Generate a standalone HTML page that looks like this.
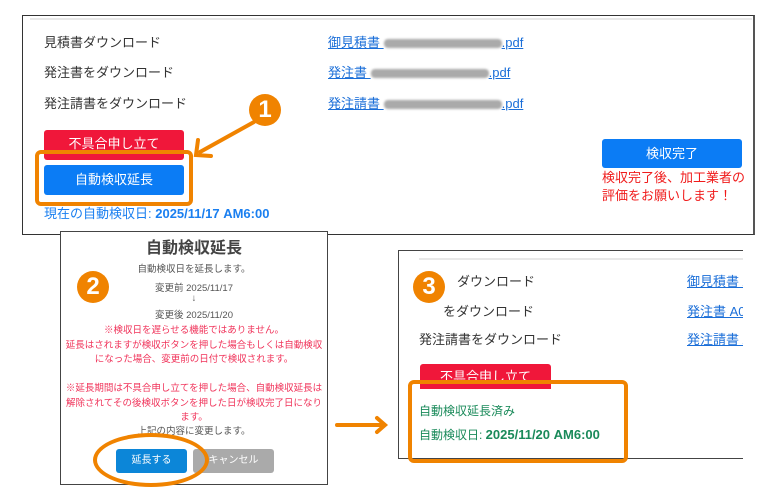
<!DOCTYPE html>
<html><head><meta charset="utf-8"><style>
*{margin:0;padding:0;box-sizing:border-box}
body{width:770px;height:500px;background:#fff;position:relative;overflow:hidden;font-family:"Liberation Sans","Noto Sans CJK JP",sans-serif;}
.a{position:absolute;white-space:nowrap}
.t{font-size:13px;color:#333}
.l{font-size:13px;color:#1a6ed8;text-decoration:underline}
.blur{display:inline-block;width:118px;height:9px;background:#aaa;border-radius:4px;vertical-align:middle;filter:blur(1px)}
.btn{position:absolute;color:#fff;font-size:13px;text-align:center;border-radius:3px}
.circ{position:absolute;width:32px;height:32px;border-radius:50%;background:#f08300;color:#fff;font-weight:bold;font-size:24px;text-align:center;line-height:32px}
.m{font-size:9.5px;text-align:center;position:absolute;left:60px;width:268px}
</style></head><body>
<div class="a" style="left:22px;top:15px;width:733px;height:220px;border:1px solid #333;border-right:2px solid #555"></div>
<div class="a" style="left:30px;top:18px;width:722px;height:2px;background:#e8e8e8"></div>
<div class="a t" style="left:44px;top:32px">見積書ダウンロード</div>
<div class="a t" style="left:44px;top:62px">発注書をダウンロード</div>
<div class="a t" style="left:44px;top:93px">発注請書をダウンロード</div>
<div class="a l" style="left:328px;top:32px">御見積書 <span class="blur"></span>.pdf</div>
<div class="a l" style="left:328px;top:62px">発注書 <span class="blur"></span>.pdf</div>
<div class="a l" style="left:328px;top:93px">発注請書 <span class="blur"></span>.pdf</div>
<div class="btn" style="left:44px;top:130px;width:140px;height:30px;background:#f0173a;line-height:28px">不具合申し立て</div>
<div class="btn" style="left:44px;top:165px;width:140px;height:30px;background:#0b7cf5;line-height:30px">自動検収延長</div>
<div class="a" style="left:35px;top:150px;width:158px;height:56px;border:4px solid #f08300;border-radius:6px"></div>
<div class="a" style="left:44px;top:203px;font-size:13px;color:#1a7ff0">現在の自動検収日: <b>2025/11/17 AM6:00</b></div>
<div class="btn" style="left:602px;top:139px;width:140px;height:29px;background:#0b7cf5;line-height:29px">検収完了</div>
<div class="a" style="left:602px;top:169px;font-size:13px;color:#f01b1b;line-height:18px">検収完了後、加工業者の<br>評価をお願いします！</div>
<div class="circ" style="left:249px;top:94px">1</div>
<svg class="a" style="left:0;top:0" width="770" height="500"><g stroke="#f08300" stroke-width="4" fill="none" stroke-linecap="round"><path d="M254 122 L200 152"/><path d="M198 140 L196 155 L211 156"/><path d="M337 425 L384 425"/><path d="M377 418 L385 425 L377 432"/></g></svg>
<!-- modal -->
<div class="a" style="left:60px;top:231px;width:268px;height:254px;border:1px solid #444;background:#fff"></div>
<div class="a" style="left:60px;top:234px;width:268px;text-align:center;font-size:16px;font-weight:bold;color:#444">自動検収延長</div>
<div class="m" style="top:261px;color:#555">自動検収日を延長します。</div>
<div class="m" style="top:280px;color:#555">変更前 2025/11/17</div>
<div class="m" style="top:293px;color:#555">↓</div>
<div class="m" style="top:307px;color:#555">変更後 2025/11/20</div>
<div class="m" style="top:324px;color:#f0335a;line-height:14.5px">※検収日を遅らせる機能ではありません。<br>延長はされますが検収ボタンを押した場合もしくは自動検収<br>になった場合、変更前の日付で検収されます。<br><br>※延長期間は不具合申し立てを押した場合、自動検収延長は<br>解除されてその後検収ボタンを押した日が検収完了日になり<br>ます。</div>
<div class="m" style="top:423px;color:#555">上記の内容に変更します。</div>
<div class="btn" style="left:116px;top:449px;width:71px;height:24px;background:#0c86d8;font-size:10px;line-height:24px">延長する</div>
<div class="btn" style="left:193px;top:449px;width:81px;height:24px;background:#aaa;font-size:10px;line-height:24px">キャンセル</div>
<div class="a" style="left:93px;top:433px;width:116px;height:54px;border:4px solid #f08300;border-radius:50%"></div>
<div class="circ" style="left:77px;top:271px">2</div>
<!-- panel 3 -->
<div class="a" style="left:398px;top:250px;width:345px;height:209px;border:1px solid #444;border-right:none;overflow:hidden;background:#fff">
<div class="a" style="left:20px;top:7px;width:330px;height:2px;background:#e8e8e8"></div>
<div class="a t" style="left:20px;top:78px">発注請書をダウンロード</div>
<div class="a t" style="left:58px;top:20px">ダウンロード</div>
<div class="a t" style="left:44px;top:50px">をダウンロード</div>
<div class="a l" style="left:288px;top:20px">御見積書 A</div>
<div class="a l" style="left:288px;top:50px">発注書 A0</div>
<div class="a l" style="left:288px;top:78px">発注請書 A</div>
<div class="btn" style="left:21px;top:113px;width:131px;height:28px;background:#f0173a;line-height:26px">不具合申し立て</div>
<div class="a" style="left:0;top:138px;width:300px;height:70px;background:#fff"></div>
<div class="a" style="left:20px;top:151px;font-size:12px;color:#1a8a5a">自動検収延長済み</div>
<div class="a" style="left:20px;top:175px;font-size:12px;color:#1a8a5a">自動検収日: <b style="font-size:13px">2025/11/20 AM6:00</b></div>
</div>
<div class="a" style="left:408px;top:380px;width:220px;height:83px;border:4px solid #f08300;border-radius:6px"></div>
<div class="circ" style="left:413px;top:271px">3</div>
</body></html>
